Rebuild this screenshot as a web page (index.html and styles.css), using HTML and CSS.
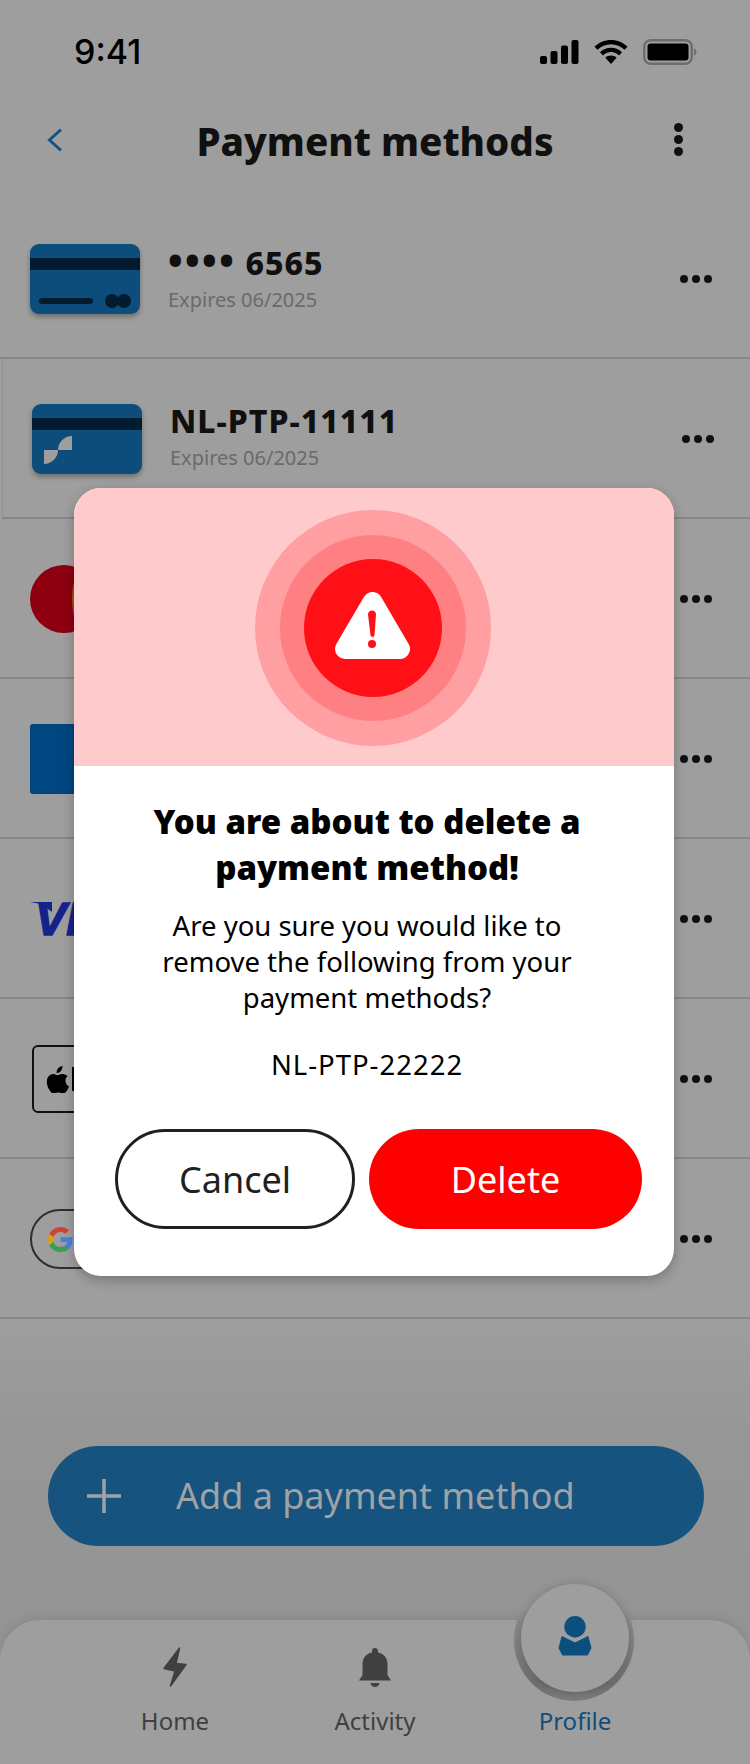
FILE: index.html
```html
<!DOCTYPE html>
<html lang="en">

<head>
    <title>Payment methods</title>
    <meta charset="utf-8">
    <link rel="stylesheet" href="styles.css">
</head>

<body>
    <div class="phone">
        <div class="statusbar">
            <span class="time">9:41</span>
            <div class="status-icons">
                <svg width="39" height="24" viewBox="0 0 39 24"><rect x="0" y="16" width="7" height="8" rx="2"/><rect x="10.500" y="11" width="7" height="13" rx="2"/><rect x="21" y="5.500" width="7" height="18.500" rx="2"/><rect x="31.500" y="0" width="7" height="24" rx="2"/></svg>
                <svg width="34" height="24" viewBox="0 0 34 24"><path d="M17 0C10.500 0 4.800 2.500 .5 6.700l3 3.100C7 6.300 11.800 4.200 17 4.200s10 2.100 13.500 5.600l3-3.100C29.200 2.500 23.500 0 17 0z"/><path d="M17 7.800c-4.300 0-8.200 1.700-11 4.500l3 3.100c2.100-2 4.900-3.300 8-3.300s5.900 1.300 8 3.300l3-3.100c-2.800-2.800-6.700-4.500-11-4.500z"/><path d="M17 15.400c-2.300 0-4.300.9-5.700 2.300L17 24l5.700-6.300c-1.400-1.400-3.400-2.300-5.700-2.300z"/></svg>
                <svg width="54" height="26" viewBox="0 0 54 26"><rect x="1.200" y="1.200" width="47.600" height="23.600" rx="6.500" fill="none" stroke="#6e6e6e" stroke-width="2.400"/><rect x="4.500" y="4.500" width="41" height="17" rx="3"/><path d="M51 9.500v7c1.500-.6 2.500-2 2.500-3.500s-1-2.900-2.500-3.500z" fill="#6e6e6e"/></svg>
            </div>
        </div>

        <div class="topbar">
            <svg class="back" width="16" height="24" viewBox="0 0 16 24"><path d="M14 1.500 2.500 12 14 22.500" fill="none" stroke="#0f5484" stroke-width="3"/></svg>
            <h1 class="page-title">Payment methods</h1>
            <div class="kebab"><i></i><i></i><i></i></div>
        </div>

        <div class="row">
            <div class="card">
                <div class="card-stripe"></div>
                <div class="card-foot"><span class="card-line"></span><span class="card-dots"><i></i><i></i></span></div>
            </div>
            <div class="row-text">
                <div class="row-name"><span class="bullets">••••</span> 6565</div>
                <div class="row-sub">Expires 06/2025</div>
            </div>
            <div class="dots"><i></i><i></i><i></i></div>
        </div>

        <div class="row row-moved">
            <div class="card">
                <div class="card-stripe"></div>
                <svg class="card-logo" width="28" height="28" viewBox="0 0 28 28"><path d="M28 0v14H14C14 6.300 20.300 0 28 0zM0 14h14c0 7.700-6.300 14-14 14z" fill="#9e9e9e"/></svg>
            </div>
            <div class="row-text">
                <div class="row-name">NL-PTP-11111</div>
                <div class="row-sub">Expires 06/2025</div>
            </div>
            <div class="dots"><i></i><i></i><i></i></div>
        </div>

        <div class="row">
            <div class="logo-master"><span></span></div>
            <div class="dots"><i></i><i></i><i></i></div>
        </div>

        <div class="row">
            <div class="logo-ideal"></div>
            <div class="dots"><i></i><i></i><i></i></div>
        </div>

        <div class="row">
            <div class="logo-visa">VISA</div>
            <div class="dots"><i></i><i></i><i></i></div>
        </div>

        <div class="row">
            <div class="logo-apple">
                <svg width="23" height="27" viewBox="0 0 23 27"><path d="M16.500 0c.2 2-.6 3.700-1.600 5-1 1.200-2.600 2.200-4.300 2-.2-1.800.7-3.700 1.600-4.800C13.300 1 15 .1 16.500 0zM22.600 9.200c-.2.100-3.200 1.900-3.100 5.500 0 4.300 3.600 5.700 3.500 5.800 0 .1-.6 2-1.900 4-1.100 1.600-2.300 3.200-4.200 3.200-1.800 0-2.400-1.100-4.500-1.100s-2.800 1.100-4.500 1.100c-1.800.1-3.200-1.800-4.300-3.400C1.300 21 -.4 15.200 1.900 11.300c1.100-1.900 3.100-3.200 5.300-3.200 1.700 0 3.200 1.100 4.300 1.100 1 0 2.900-1.400 4.900-1.200.8 0 3.200.3 5.200 2.200z" fill="#000"/></svg>
                <span class="apple-p"></span>
            </div>
            <div class="dots"><i></i><i></i><i></i></div>
        </div>

        <div class="row">
            <div class="logo-google">
                <svg width="25" height="25" viewBox="0 0 48 48"><path fill="#4a7fe0" d="M47 24.500c0-1.600-.1-3.200-.4-4.700H24v9h13c-.6 3-2.300 5.500-4.800 7.200v6h7.700C44.400 37.800 47 31.700 47 24.500z"/><path fill="#3a9e54" d="M24 48c6.500 0 11.900-2.100 15.900-5.800l-7.700-6c-2.200 1.500-4.900 2.300-8.200 2.300-6.300 0-11.600-4.200-13.500-9.900H2.500v6.200C6.400 42.600 14.600 48 24 48z"/><path fill="#d2a21c" d="M10.500 28.600c-.5-1.500-.8-3-.8-4.600s.3-3.200.8-4.600v-6.200H2.500C.9 16.400 0 20.100 0 24s.9 7.600 2.500 10.800l8-6.200z"/><path fill="#cf4436" d="M24 9.500c3.500 0 6.700 1.200 9.200 3.600l6.900-6.900C35.900 2.400 30.500 0 24 0 14.600 0 6.400 5.400 2.500 13.200l8 6.200C12.400 13.700 17.700 9.500 24 9.500z"/></svg>
            </div>
            <div class="dots"><i></i><i></i><i></i></div>
        </div>

        <div class="add-wrap">
            <div class="add-btn">
                <svg width="34" height="34" viewBox="0 0 34 34"><path d="M17 0v34M0 17h34" stroke="#9fa3a6" stroke-width="3.500" fill="none"/></svg>
                <span>Add a payment method</span>
            </div>
        </div>

        <div class="tabbar">
            <div class="tab">
                <svg width="24" height="40" viewBox="0 0 24 40"><path d="M16.500 1 1 21.500 12 24 7.500 39 23 17.500 13 16.500z" fill="#404040" stroke="#404040" stroke-width="1.500" stroke-linejoin="round"/></svg>
                <span>Home</span>
            </div>
            <div class="tab">
                <svg width="32" height="39" viewBox="0 0 32 39"><path d="M16 0c1.800 0 3 1.200 3 3v1.400C25 5.600 28.500 10 28.500 16v11l3.500 5.500H0L3.500 27V16C3.500 10 7 5.600 13 4.400V3c0-1.800 1.200-3 3-3z" fill="#404040"/><path d="M11.500 35h9c-.4 2.400-2.200 4-4.500 4s-4.100-1.600-4.500-4z" fill="#404040"/></svg>
                <span>Activity</span>
            </div>
            <div class="tab tab-active">
                <span>Profile</span>
            </div>
            <div class="fab">
                <svg width="34" height="40" viewBox="0 0 34 40"><circle cx="17" cy="10.700" r="10.700" fill="#0c4f7e"/><path d="M4 20.500 17 27l13-6.500 3 11.500-3.500 7h-25L1 32z" fill="#0c4f7e" stroke="#0c4f7e" stroke-width="1" stroke-linejoin="round"/></svg>
            </div>
        </div>

        <div class="modal">
            <div class="modal-head">
                <div class="ring ring-outer">
                    <div class="ring ring-mid">
                        <div class="ring ring-inner">
                            <svg class="warn" width="75" height="67" viewBox="0 0 75 67"><path d="M37.500 10 65 57H10z" fill="#fff" stroke="#fff" stroke-width="20" stroke-linejoin="round"/><path d="M33 22.500c0-5.500 8-5.500 8 0L39.500 43c-.2 2.500-3.800 2.500-4 0z" fill="#ff0f16"/><circle cx="37" cy="52" r="4" fill="#ff0f16"/></svg>
                        </div>
                    </div>
                </div>
            </div>
            <div class="modal-body">
                <div class="modal-copy">
                    <h2 class="modal-title">You are about to delete a<br>payment method!</h2>
                    <p class="modal-text">Are you sure you would like to<br>remove the following from your<br>payment methods?</p>
                    <p class="modal-name">NL-PTP-22222</p>
                </div>
                <div class="modal-actions">
                    <button class="btn btn-cancel">Cancel</button>
                    <button class="btn btn-delete">Delete</button>
                </div>
            </div>
        </div>
    </div>
</body>

</html>
```

FILE: styles.css
```css
html,
body {
    margin: 0;
    padding: 0;
}

.phone {
    position: relative;
    width: 750px;
    height: 1764px;
    overflow: hidden;
    background: linear-gradient(#9e9e9e 0, #9e9e9e 1320px, #969696 1440px, #949494 1620px);
    font-family: "Noto Sans", "Lato", sans-serif;
    color: #101010;
}

/* status bar */
.statusbar {
    height: 90px;
    padding: 0 53px 0 74px;
    display: flex;
    justify-content: space-between;
    align-items: flex-start;
    box-sizing: border-box;
}

.time {
    margin-top: 31px;
    font-family: "Inter", sans-serif;
    font-weight: 500;
    font-size: 34px;
    line-height: 42px;
    color: #000;
}

.status-icons {
    margin-top: 39px;
    display: flex;
    align-items: center;
    gap: 15px;
}

/* top bar */
.topbar {
    height: 109px;
    padding: 0 0 0 47px;
    position: relative;
    display: flex;
    align-items: flex-start;
}

.back {
    margin-top: 38px;
}

.page-title {
    margin: 0;
    position: absolute;
    left: 0;
    right: 0;
    top: 26px;
    text-align: center;
    font-size: 38.600px;
    line-height: 50px;
    font-weight: 800;
    color: #101010;
}

.kebab {
    position: absolute;
    left: 674px;
    top: 33px;
    display: flex;
    flex-direction: column;
    gap: 3px;
}

.kebab i {
    display: block;
    width: 9px;
    height: 9px;
    border-radius: 50%;
    background: #101010;
}

/* list */
.row {
    height: 160px;
    box-sizing: border-box;
    padding: 2px 38px 0 30px;
    display: flex;
    align-items: center;
    border-bottom: 2px solid #868686;
}

.row-moved {
    margin-left: 2px;
    margin-right: -2px;
    border-left: 1px solid #8f8f8f;
    padding-left: 29px;
}

.dots {
    margin-left: auto;
    display: flex;
    gap: 4px;
}

.dots i {
    display: block;
    width: 8px;
    height: 8px;
    border-radius: 50%;
    background: #101010;
}

.card {
    width: 110px;
    height: 70px;
    flex: none;
    border-radius: 9px;
    background: #0c4d7b;
    box-shadow: 0 3px 5px rgba(0, 0, 0, .3);
    padding-top: 14px;
    box-sizing: border-box;
}

.card-stripe {
    height: 12px;
    background: #031b2e;
}

.card-foot {
    margin-top: 24px;
    padding: 0 9px;
    display: flex;
    justify-content: space-between;
    align-items: center;
}

.card-line {
    width: 54px;
    height: 6px;
    border-radius: 3px;
    background: #031b2e;
}

.card-dots {
    display: flex;
}

.card-dots i {
    display: block;
    width: 14px;
    height: 14px;
    margin-left: -2px;
    border-radius: 50%;
    background: #031b2e;
}

.card-logo {
    display: block;
    margin: 6px 0 0 12px;
}

.row-text {
    margin-left: 28px;
    margin-top: -5px;
}

.row-name {
    font-size: 32px;
    line-height: 36px;
    font-weight: 800;
    letter-spacing: 1px;
    color: #101010;
}

.bullets {
    font-size: 38px;
    line-height: 36px;
    letter-spacing: 2.500px;
}

.row-sub {
    margin-top: 7px;
    font-size: 20px;
    line-height: 24px;
    color: #6a6a6a;
}

.logo-master {
    width: 68px;
    height: 68px;
    flex: none;
    border-radius: 50%;
    background: #8e0010;
    position: relative;
}

.logo-master span {
    position: absolute;
    left: 42px;
    top: 14px;
    width: 10px;
    height: 40px;
    background: #a35a00;
    border-radius: 50%;
}

.logo-ideal {
    width: 70px;
    height: 70px;
    flex: none;
    border-radius: 3px;
    background: #004680;
}

.logo-visa {
    flex: none;
    position: relative;
    padding-left: 5px;
    font-family: "Liberation Sans", sans-serif;
    font-size: 47px;
    line-height: 48px;
    font-style: italic;
    font-weight: 700;
    color: #14238a;
    -webkit-text-stroke: 1.500px #14238a;
}

/* the thin flag on the top left of the V */
.logo-visa::before {
    content: "";
    position: absolute;
    left: 0;
    top: 7px;
    width: 22px;
    height: 10px;
    background: #14238a;
    clip-path: polygon(0 0, 100% 0, 100% 100%, 50% 20%);
}

.logo-apple {
    width: 70px;
    height: 68px;
    margin-left: 2px;
    flex: none;
    box-sizing: border-box;
    border: 2px solid #101010;
    border-radius: 6px;
    padding-left: 12px;
    display: flex;
    align-items: center;
    gap: 3px;
}

.apple-p {
    width: 5px;
    height: 24px;
    background: #000;
}

.logo-google {
    width: 90px;
    height: 60px;
    flex: none;
    box-sizing: border-box;
    border: 2px solid #2e2e2e;
    border-radius: 30px;
    padding-left: 16px;
    display: flex;
    align-items: center;
}

/* add button */
.add-wrap {
    padding: 127px 46px 0 48px;
}

.add-btn {
    height: 100px;
    border-radius: 50px;
    background: #16537e;
    padding-left: 39px;
    display: flex;
    align-items: center;
    gap: 55px;
    font-size: 36px;
    line-height: 44px;
    color: #9fa3a6;
}

/* bottom tabs */
.tabbar {
    position: absolute;
    z-index: 0;
    left: 0;
    right: 0;
    bottom: 0;
    height: 144px;
    border-radius: 40px 40px 0 0;
    background: #9e9e9e;
    box-shadow: 0 -3px 8px rgba(0, 0, 0, .08);
    display: grid;
    grid-template-columns: 200px 200px 200px;
    padding-left: 75px;
}

.tab {
    display: flex;
    flex-direction: column;
    align-items: center;
    justify-content: flex-end;
    height: 123px;
    box-sizing: border-box;
    font-size: 24px;
    line-height: 30px;
    color: #404040;
}

.tab svg {
    margin-bottom: 19px;
}

.tab span {
    margin-bottom: 7px;
}

.tab-active {
    color: #0f4d7c;
}

.fab {
    position: absolute;
    left: 521px;
    top: -36px;
    width: 108px;
    height: 108px;
    border-radius: 50%;
    background: #9e9e9e;
    box-shadow: 0 0 10px rgba(0, 0, 0, .18);
    display: flex;
    align-items: flex-start;
    justify-content: center;
    padding-top: 32px;
    box-sizing: border-box;
}

/* dark well under the button, only shows inside the tab bar */
.fab::before {
    content: "";
    position: absolute;
    left: -7px;
    top: -5px;
    width: 120px;
    height: 122px;
    border-radius: 50%;
    background: linear-gradient(#8a8a8a 35%, #6e6e6e 85%, #7c7c7c 100%);
    clip-path: inset(41px -4px -4px -4px);
    z-index: -1;
}

/* modal */
.modal {
    position: absolute;
    left: 74px;
    top: 488px;
    width: 600px;
    height: 788px;
    border-radius: 27px;
    overflow: hidden;
    background: #fff;
    box-shadow: 0 4px 12px rgba(0, 0, 0, .25);
}

.modal-head {
    height: 278px;
    background: #ffcacb;
    display: flex;
    align-items: center;
    justify-content: center;
}

.ring {
    border-radius: 50%;
    display: flex;
    align-items: center;
    justify-content: center;
}

.ring-outer {
    width: 236px;
    height: 236px;
    margin-right: 3px;
    margin-top: 2px;
    background: #ff9fa1;
}

.ring-mid {
    width: 186px;
    height: 186px;
    background: #ff8082;
}

.ring-inner {
    width: 138px;
    height: 138px;
    background: #ff0f16;
}

.warn {
    margin-top: -5px;
}

.modal-body {
    padding: 33px 32px 0 41px;
    text-align: center;
}

.modal-copy {
    width: 504px;
}

.modal-title {
    margin: 0;
    font-size: 33px;
    line-height: 46px;
    font-weight: 900;
    color: #000;
}

.modal-text {
    margin: 17px 0 0;
    font-size: 27.500px;
    line-height: 36px;
    color: #000;
}

.modal-name {
    margin: 31px 0 0;
    font-size: 27.500px;
    line-height: 36px;
    letter-spacing: 1px;
    color: #000;
}

.modal-actions {
    margin-top: 46px;
    display: flex;
    gap: 14px;
}

.btn {
    height: 100px;
    border-radius: 50px;
    font-family: inherit;
    font-size: 36px;
    box-sizing: border-box;
}

.btn-cancel {
    width: 240px;
    background: #fff;
    color: #202020;
    border: 3px solid #202020;
}

.btn-delete {
    width: 273px;
    background: #ff0000;
    color: #fff;
    border: 0;
}
```
